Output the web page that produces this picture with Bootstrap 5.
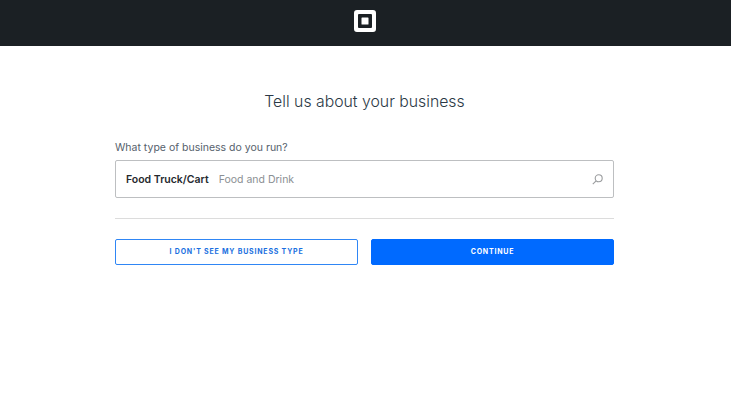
<!DOCTYPE html>
<html lang="en">
<head>
    <meta charset="UTF-8">
    <meta name="viewport" content="width=device-width, initial-scale=1.0">
    <title>Tell us about your business</title>
    <link href="https://cdn.jsdelivr.net/npm/bootstrap@5.3.0/dist/css/bootstrap.min.css" rel="stylesheet">
    <style>
        body { font-family: "Inter", "Liberation Sans", sans-serif; color: #3e4348; background: #fff; }
        .top-bar { height: 46px; background: #1b2024; padding: 0 1px 4px 0; }
        .form-wrap { width: 499px; margin-left: 115px; }
        .page-title { font-size: 15.8px; font-weight: 300; color: #2b3946; margin: 45px 0 0; line-height: 22px; text-align: center; }
        .field-label { font-size: 10.5px; color: #56616c; line-height: 14px; margin: 28px 0 5px; }
        .biz-box { height: 38px; border: 1px solid #bdbfc1; border-radius: 2px; padding: 1px 10px 0; font-size: 10.5px; }
        .biz-name { font-weight: 600; color: #25292e; }
        .biz-cat { color: #8b8f93; margin-left: 10px; }
        .form-rule { border: 0; border-top: 1px solid #dcdcdc; opacity: 1; margin: 20px 0; }
        .btn-row { display: grid; grid-template-columns: 243px 243px; column-gap: 13px; }
        .act-btn { height: 26px; font-size: 7px; font-weight: 700; letter-spacing: .8px; border-radius: 2px; padding: 0; }
        .act-outline { border: 1px solid #2f86f5; color: #1a6fe0; background: #fff; }
        .act-solid { border: 1px solid #006aff; color: #fff; background: #006aff; }
    </style>
</head>
<body>
    <div class="top-bar d-flex align-items-center justify-content-center">
        <svg width="22" height="22" viewBox="0 0 22 22">
            <path fill="#fff" fill-rule="evenodd" d="M3 0h16a3 3 0 0 1 3 3v16a3 3 0 0 1-3 3H3a3 3 0 0 1-3-3V3a3 3 0 0 1 3-3zM5 4a1 1 0 0 0-1 1v12a1 1 0 0 0 1 1h12a1 1 0 0 0 1-1V5a1 1 0 0 0-1-1z"/>
            <rect x="7.5" y="7.5" width="7" height="7" rx=".6" fill="#fff"/>
        </svg>
    </div>
    <div class="form-wrap">
        <h1 class="page-title">Tell us about your business</h1>
        <div class="field-label">What type of business do you run?</div>
        <div class="biz-box d-flex align-items-center">
            <span class="biz-name">Food Truck/Cart</span>
            <span class="biz-cat">Food and Drink</span>
            <svg class="ms-auto" width="11" height="11" viewBox="0 0 11 11" fill="none" stroke="#9a9c9e" stroke-width="1.1">
                <circle cx="6.7" cy="4.3" r="3.5"/>
                <path d="M4.1 6.9 .8 10.2"/>
            </svg>
        </div>
        <hr class="form-rule">
        <div class="btn-row">
            <button type="button" class="btn act-btn act-outline">I DON'T SEE MY BUSINESS TYPE</button>
            <button type="button" class="btn act-btn act-solid">CONTINUE</button>
        </div>
    </div>
    <script src="https://cdn.jsdelivr.net/npm/bootstrap@5.3.0/dist/js/bootstrap.bundle.min.js"></script>
</body>
</html>
